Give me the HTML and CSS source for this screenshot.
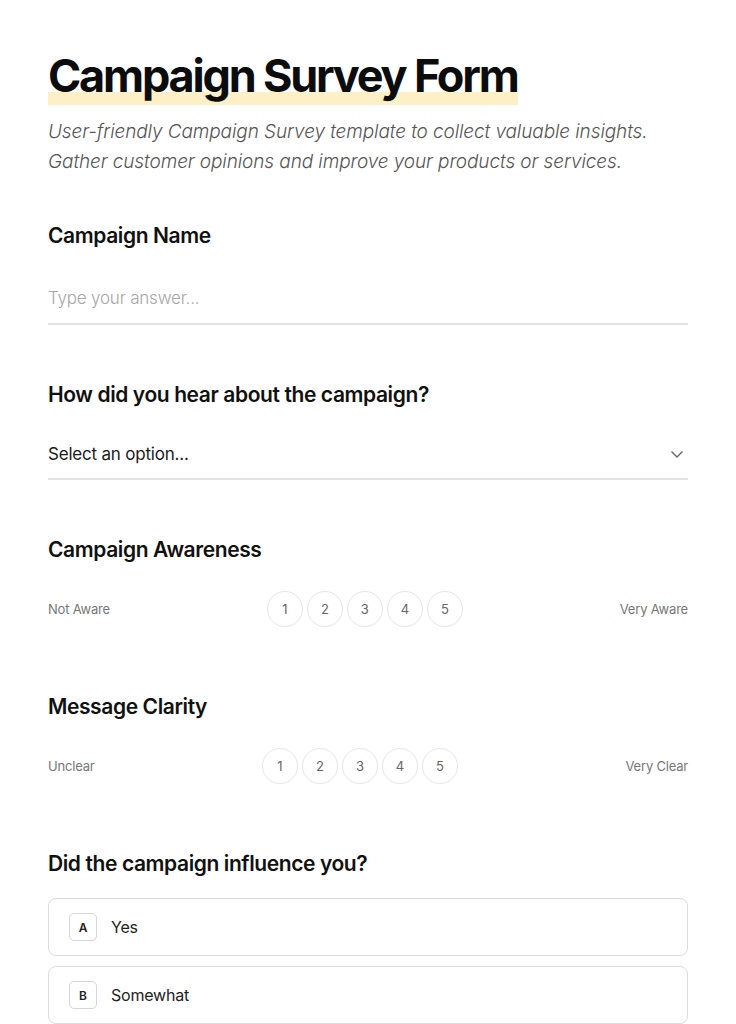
FILE: index.html
```html
<!DOCTYPE html>
<html lang="en">
<head>
<meta charset="utf-8">
<title>Campaign Survey Form</title>
<link rel="stylesheet" href="styles.css">
</head>
<body>
<main class="page">
  <header class="intro">
    <h1 class="title"><span class="title-mark">Campaign Survey Form</span></h1>
    <p class="subtitle">User-friendly Campaign Survey template to collect valuable insights. Gather customer opinions and improve your products or services.</p>
  </header>

  <section class="field">
    <h2 class="label">Campaign Name</h2>
    <div class="input placeholder">Type your answer...</div>
  </section>

  <section class="field">
    <h2 class="label">How did you hear about the campaign?</h2>
    <div class="input select">
      <span>Select an option...</span>
      <svg class="chev" width="14" height="9" viewBox="0 0 14 9"><path d="M1.5 1.5 L7 7 L12.5 1.5" fill="none" stroke="#666" stroke-width="1.4"/></svg>
    </div>
  </section>

  <section class="field">
    <h2 class="label">Campaign Awareness</h2>
    <div class="scale">
      <span class="scale-end">Not Aware</span>
      <div class="dots"><span class="dot">1</span><span class="dot">2</span><span class="dot">3</span><span class="dot">4</span><span class="dot">5</span></div>
      <span class="scale-end">Very Aware</span>
    </div>
  </section>

  <section class="field">
    <h2 class="label">Message Clarity</h2>
    <div class="scale">
      <span class="scale-end">Unclear</span>
      <div class="dots"><span class="dot">1</span><span class="dot">2</span><span class="dot">3</span><span class="dot">4</span><span class="dot">5</span></div>
      <span class="scale-end">Very Clear</span>
    </div>
  </section>

  <section class="field">
    <h2 class="label">Did the campaign influence you?</h2>
    <div class="options">
      <div class="option"><span class="key">A</span><span class="opt-text">Yes</span></div>
      <div class="option"><span class="key">B</span><span class="opt-text">Somewhat</span></div>
    </div>
  </section>
</main>
</body>
</html>
```

FILE: styles.css
```css
* { box-sizing: border-box; }
html, body { margin: 0; padding: 0; background: #fff; }
body {
  font-family: Inter, "Open Sans", "Liberation Sans", sans-serif;
  color: #111;
}
.page {
  padding: 50px 48px 0;
}
.title {
  margin: 0;
  font-size: 45px;
  line-height: 52px;
  font-weight: 700;
  letter-spacing: -2.2px;
  color: #0c0c0c;
}
.title-mark {
  display: inline-block;
  background: linear-gradient(to bottom, transparent 0, transparent 42px, #fdefc6 42px, #fdefc6 55px, transparent 55px);
  padding-bottom: 3px;
}
.subtitle {
  margin: 12px 0 0;
  font-size: 19px;
  line-height: 30px;
  font-style: italic;
  font-weight: 300;
  color: #555;
  letter-spacing: -0.1px;
  max-width: 640px;
}
.field { margin-top: 56px; }
.intro + .field { margin-top: 45px; }
.label {
  margin: 0;
  font-size: 21px;
  line-height: 28px;
  font-weight: 600;
  letter-spacing: -0.4px;
  color: #111;
}
.input {
  margin-top: 32px;
  height: 43px;
  border-bottom: 2px solid #e2e2e2;
  font-size: 17px;
  line-height: 26px;
  font-weight: 300;
  padding-top: 3px;
  letter-spacing: -0.2px;
}
.placeholder { color: #a6a6a6; }
.select {
  margin-top: 29px;
  height: 42px;
  display: flex;
  justify-content: space-between;
  align-items: center;
  padding-top: 0;
  padding-bottom: 8px;
  color: #1a1a1a;
  font-weight: 400;
}
.chev { margin-right: 4px; }
.scale {
  margin-top: 27px;
  padding-bottom: 10px;
  display: flex;
  justify-content: space-between;
  align-items: center;
}
.scale-end {
  font-size: 13px;
  color: #777;
  letter-spacing: -0.2px;
}
.dots { display: flex; gap: 4px; }
.dot {
  width: 36px;
  height: 36px;
  border: 1px solid #e6e6e6;
  border-radius: 50%;
  display: flex;
  align-items: center;
  justify-content: center;
  font-size: 13px;
  color: #666;
}
.options {
  margin-top: 20px;
  display: flex;
  flex-direction: column;
  gap: 10px;
}
.option {
  height: 58px;
  border: 1px solid #dcdcdc;
  border-radius: 8px;
  display: flex;
  align-items: center;
  padding-left: 20px;
}
.key {
  width: 28px;
  height: 28px;
  border: 1px solid #d6d6d6;
  border-radius: 5px;
  display: flex;
  align-items: center;
  justify-content: center;
  font-size: 12px;
  font-weight: 600;
  color: #222;
}
.opt-text {
  margin-left: 14px;
  font-size: 16px;
  color: #222;
  letter-spacing: -0.2px;
}
```
